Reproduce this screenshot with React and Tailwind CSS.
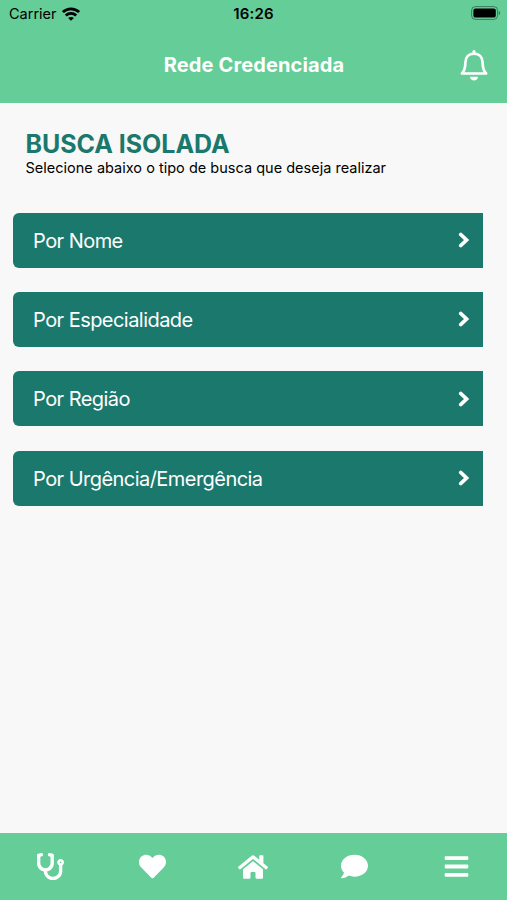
import { FaBars, FaComment, FaHeart, FaHome, FaStethoscope } from 'react-icons/fa';

const searchOptions = ['Por Nome', 'Por Especialidade', 'Por Região', 'Por Urgência/Emergência'];

const tabs = [
  { label: 'Rede', icon: FaStethoscope, size: 27 },
  { label: 'Saúde', icon: FaHeart, size: 27 },
  { label: 'Home', icon: FaHome, size: 30 },
  { label: 'Chat', icon: FaComment, size: 27 },
  { label: 'Menu', icon: FaBars, size: 27 },
];

function WifiIcon() {
  return (
    <svg className="w-[18px] h-[14px]" viewBox="0 0 18 14" fill="none" stroke="black" strokeWidth="2.8">
      <path d="M.9 5.100C5.500.7 12.500.7 17.100 5.100" />
      <path d="M3.800 8.500c3-2.800 7.400-2.800 10.400 0" />
      <path d="M9 13.800 6.100 11C7.700 9.500 10.300 9.500 11.900 11Z" fill="black" stroke="none" />
    </svg>
  );
}

function BatteryIcon() {
  return (
    <svg className="w-[30px] h-[14px]" viewBox="0 0 30 14">
      <rect x=".6" y=".6" width="26" height="12.800" rx="3.800" fill="none" stroke="black" strokeOpacity=".4" />
      <rect x="2.400" y="2.400" width="22.400" height="9.200" rx="2.200" fill="black" />
      <path d="M27.800 4.800v4.400c1.900-.8 1.900-3.600 0-4.400Z" fill="black" fillOpacity=".4" />
    </svg>
  );
}

function BellIcon() {
  return (
    <svg className="w-7 h-[31px]" viewBox="0 0 28 31" fill="none" stroke="currentColor" strokeLinecap="round" strokeLinejoin="round">
      <path d="M14 1.500v2" strokeWidth="3" />
      <path
        d="M1.900 23.500C4.600 20.800 5.300 18.500 5.400 12.500C5.500 7 9 3.700 14 3.700S22.500 7 22.600 12.500C22.700 18.500 23.400 20.800 26.100 23.500Z"
        strokeWidth="2.700"
      />
      <path d="M10 26.700h8c0 5-8 5-8 0Z" fill="currentColor" stroke="none" />
    </svg>
  );
}

function ChevronIcon() {
  return (
    <svg className="w-3 h-4" viewBox="0 0 12 16" fill="none" stroke="currentColor" strokeWidth="3.800">
      <path d="m2.800 2.500 5.700 5.500-5.700 5.500" strokeLinecap="round" />
    </svg>
  );
}

function StatusBar() {
  return (
    <div className="grid grid-cols-3 items-center h-7 pl-[9px] pr-[6px] text-black">
      <div className="flex items-center gap-[5px] -mt-px">
        <span className="text-[14.5px]">Carrier</span>
        <WifiIcon />
      </div>
      <span className="text-center text-[15px] font-semibold tracking-[0.15px] -ml-[3px]">16:26</span>
      <div className="flex justify-end -mt-[2px]">
        <BatteryIcon />
      </div>
    </div>
  );
}

function App() {
  return (
    <div className="h-screen flex flex-col bg-[#f8f8f8] font-['Inter',sans-serif]">
      {/* Header */}
      <header className="h-[103px] shrink-0 bg-[#65cd97]">
        <StatusBar />
        <div className="flex items-center h-[74px] pr-[19px]">
          <div className="flex-1 pl-[48px] text-center">
            <h1 className="text-[20px] font-bold tracking-[0.13px] text-white">Rede Credenciada</h1>
          </div>
          <button className="text-white" aria-label="Notificações">
            <BellIcon />
          </button>
        </div>
      </header>

      <main className="flex-1">
        <div className="pt-[27px] pl-[25.5px]">
          <h2 className="text-[25px] leading-[28px] font-bold tracking-[-0.05px] text-[#1b786d]">BUSCA ISOLADA</h2>
          <p className="text-[14.5px] leading-5 tracking-[0.01px] text-black">
            Selecione abaixo o tipo de busca que deseja realizar
          </p>
        </div>

        {/* Search options */}
        <div className="flex flex-col gap-[24.4px] mt-[34.500px] ml-[13px] mr-[24.500px]">
          {searchOptions.map((option) => (
            <button
              key={option}
              className="flex items-center justify-between h-[55px] pl-5 pr-[13px] rounded-l-[6px] bg-[#1b786d] text-white"
            >
              <span className="pt-px text-[20px] tracking-[-0.54px]">{option}</span>
              <ChevronIcon />
            </button>
          ))}
        </div>
      </main>

      {/* Bottom tabs */}
      <nav className="grid grid-cols-5 items-center h-[67px] shrink-0 bg-[#65cd97] text-white">
        {tabs.map(({ label, icon: Icon, size }) => (
          <button key={label} className="flex justify-center" aria-label={label}>
            <Icon size={size} />
          </button>
        ))}
      </nav>
    </div>
  );
}

export default App;
